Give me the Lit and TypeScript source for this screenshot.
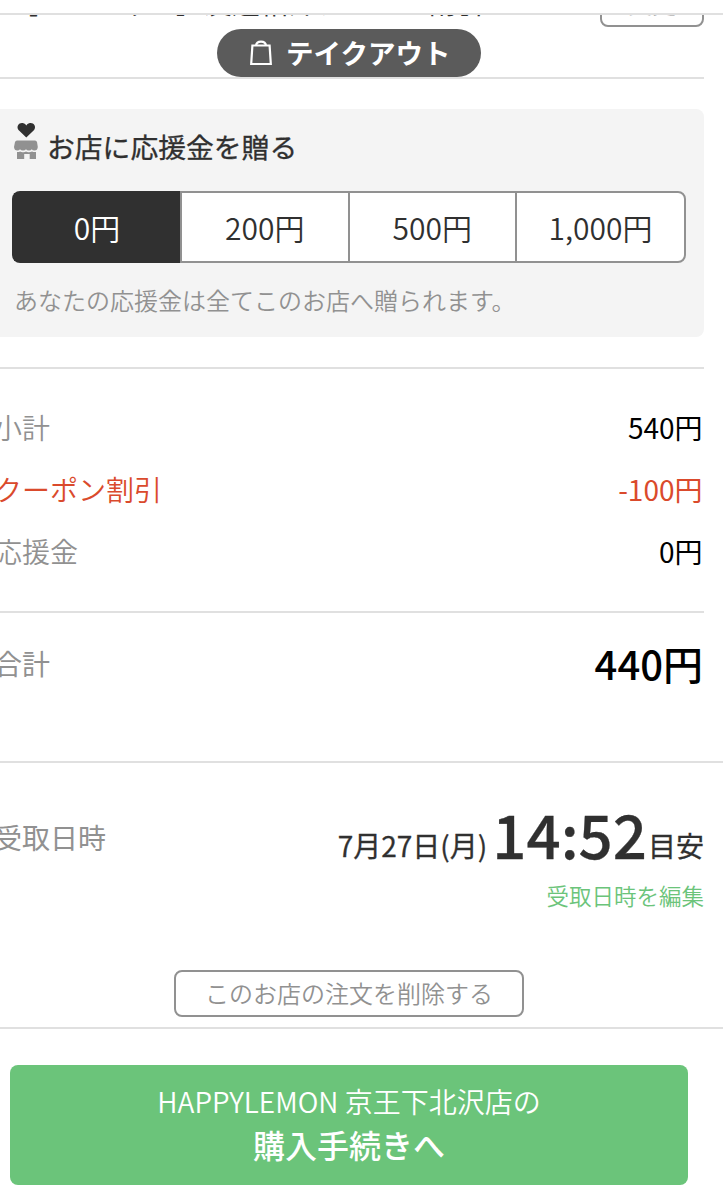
import { LitElement, html, css } from "lit";
import { customElement, state } from "lit/decorators.js";

@customElement("app-root")
class AppRoot extends LitElement {
  @state() private selected = 0;

  private readonly amounts = ["0円", "200円", "500円", "1,000円"];

  static styles = css`
    :host {
      display: flex;
      flex-direction: column;
      height: 1200px;
      overflow: hidden;
      background: #fff;
      color: #303030;
      font-family: "Noto Sans CJK JP", sans-serif;
      font-weight: 400;
    }
    * { box-sizing: border-box; }
    button { font: inherit; margin: 0; padding: 0; cursor: pointer; }
    .header { height: 13px; flex: none; }
    .scroll { height: 748px; flex: none; border-top: 2px solid #e0e0e0; position: relative; overflow: hidden; }
    .coupon {
      display: flex; justify-content: space-between; align-items: flex-start;
      height: 64px; margin-right: 19px; padding-left: 10px;
      border-bottom: 2px solid #e0e0e0;
    }
    .coupon-name { font-size: 28px; line-height: 40px; margin-top: -33px; white-space: nowrap; }
    .coupon-edit {
      width: 104px; height: 48px; margin-top: -36px; border: 2px solid #919191;
      border-radius: 8px; background: #fff; color: #919191; font-size: 24px; font-weight: 350; line-height: 44px; padding-bottom: 3px;
    }
    .pill {
      position: absolute; left: 217px; top: 14px; width: 264px; height: 48px;
      display: flex; align-items: center; padding-left: 33px; gap: 14px;
      border-radius: 24px; background: #5b5b5b; color: #fff;
      font-size: 27.5px; font-weight: 700; line-height: 46px;
    }
    .pill span { margin-top: -2px; }
    .cheer { height: 228px; margin: 30px 19px 30px 0; padding: 16px 18px 0 12px; border-radius: 0 8px 8px 0; background: #f4f4f4; }
    .cheer-title { display: flex; height: 46px; font-size: 27.8px; font-weight: 400; -webkit-text-stroke: 0.3px #303030; line-height: 43px; gap: 8px; margin-bottom: 20px; }
    .shop { flex: none; margin-top: -4px; }
    .choices { display: flex; height: 72px; }
    .choice {
      flex: 1 1 0; border: 2px solid #919191; border-right-width: 0; background: #fff; color: #303030;
      font-size: 30px; font-weight: 350; line-height: 66px;
    }
    .choice:first-child { flex: none; width: 168px; border-radius: 8px 0 0 8px; }
    .choice:last-child { flex: none; width: 171px; border-right-width: 2px; border-radius: 0 8px 8px 0; }
    .choice.on { background: #303030; border-color: #303030; color: #fff; }
    .note { padding: 19px 0 0 2px; font-size: 24px; font-weight: 350; line-height: 36px; color: #919191; }
    .lines { margin-right: 19px; padding: 27px 0 29px; border-top: 2px solid #e0e0e0; }
    .line { display: flex; justify-content: space-between; height: 62px; line-height: 62px; font-size: 28px; margin-left: -6px; }
    .label { color: #919191; font-weight: 350; }
    .value { color: #000; padding-right: 1.5px; }
    .off .label, .off .value { color: #da4a2c; }
    .total { display: flex; justify-content: space-between; align-items: center; height: 150px; margin-right: 19px; padding-bottom: 49px; border-top: 2px solid #e0e0e0; }
    .total .label { font-size: 28px; font-weight: 400; margin-left: -6px; }
    .total .value { font-size: 40px; font-weight: 500; padding-right: 1px; }
    .pickup { height: 266px; flex: none; border-top: 2px solid #e0e0e0; padding: 33px 19px 0 0; }
    .when { display: flex; justify-content: space-between; align-items: baseline; height: 82px; line-height: 70px; margin-left: -6px; font-size: 28px; }
    .when .label { font-weight: 400; position: relative; top: -8px; }
    .date { font-weight: 400; -webkit-text-stroke: 0.3px #303030; white-space: nowrap; display: flex; align-items: baseline; }
    .time { font-size: 60px; font-weight: 500; margin: 0 1px 0 5px; position: relative; top: 2px; }
    .edit { text-align: right; font-size: 22.5px; font-weight: 350; line-height: 34px; color: #6bc47a; }
    .remove { display: block; width: 350px; height: 47px; margin: 58px 0 0 174px; border: 2px solid #919191; border-radius: 8px; background: #fff; color: #919191; font-size: 24px; font-weight: 350; line-height: 41px; padding-bottom: 2px; }
    .footer { flex: 1; border-top: 2px solid #e0e0e0; padding: 36px 35px 0 10px; }
    .buy { display: flex; flex-direction: column; align-items: center; width: 100%; height: 120px; padding-top: 15px; border: 0; border-radius: 8px; background: #6bc47a; color: #fff; }
    .store { font-size: 28px; font-weight: 350; line-height: 42px; }
    .go { font-size: 32px; font-weight: 500; line-height: 44px; }
  `;

  render() {
    return html`
      <div class="header"></div>
      <div class="scroll">
        <div class="coupon">
          <span class="coupon-name">［スペシャル］友達紹介クーポン割引</span>
          <button class="coupon-edit">変更</button>
        </div>
        <div class="pill">
          <svg width="22" height="26" viewBox="0 0 22 26" fill="none" stroke="#fff" stroke-width="2.2">
            <path d="M2.400 5.500H19.600L20.800 24H1.200Z M6 5.500Q6.500 1.700 11 1.700T16 5.500" />
          </svg>
          <span>テイクアウト</span>
        </div>
        <div class="cheer">
          <div class="cheer-title">
            <svg class="shop" width="27" height="40" viewBox="0 0 27 40">
              <path fill="#303030" d="M14.300 16.500L6.500 9C3.800 5 7.500 .8 11.500 2.200Q13.400 2.800 14.300 4.400Q15.200 2.800 17.100 2.200C21.100 .8 24.800 5 22.100 9Z" />
              <path fill="#919191" d="M5 19.500H23Q24.500 19.500 25 21L25.800 26Q25.500 29.500 22.500 29.500Q20.500 29.500 19.800 28.300Q19 29.500 17 29.500Q14.800 29.500 14 28.300Q13 29.500 11 29.500Q9 29.500 8 28.300Q7.300 29.500 5.300 29.500Q2.300 29.500 2 26L3 21Q3.500 19.500 5 19.500Z M5 31Q7 31.200 8 30.400Q9.500 31.400 11.300 31.200Q13 31.200 14 30.400Q15.500 31.400 17 31.200Q18.500 31.200 20 30.400Q21.500 31.200 24 31V38H17.700V33H12.200V38H5Z" />
            </svg>
            <span>お店に応援金を贈る</span>
          </div>
          <div class="choices">
            ${this.amounts.map(
              (a, i) => html`<button class="choice ${i === this.selected ? "on" : ""}" @click=${() => (this.selected = i)}>${a}</button>`
            )}
          </div>
          <div class="note">あなたの応援金は全てこのお店へ贈られます。</div>
        </div>
        <div class="lines">
          <div class="line"><span class="label">小計</span><span class="value">540円</span></div>
          <div class="line off"><span class="label">クーポン割引</span><span class="value">-100円</span></div>
          <div class="line"><span class="label">応援金</span><span class="value">0円</span></div>
        </div>
        <div class="total"><span class="label">合計</span><span class="value">440円</span></div>
      </div>
      <div class="pickup">
        <div class="when">
          <span class="label">受取日時</span>
          <span class="date">7月27日(月)<span class="time">14:52</span>目安</span>
        </div>
        <div class="edit">受取日時を編集</div>
        <button class="remove">このお店の注文を削除する</button>
      </div>
      <div class="footer">
        <button class="buy"><span class="store">HAPPYLEMON 京王下北沢店の</span><span class="go">購入手続きへ</span></button>
      </div>
    `;
  }
}
